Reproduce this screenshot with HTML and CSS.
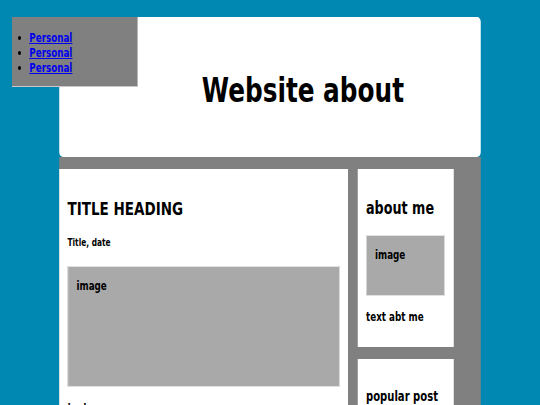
FILE: index.html
```html
<!DOCTYPE html>
<html>
<head>
<meta charset="utf-8">
<title>Website about</title>
<link rel="stylesheet" href="styles.css">
</head>
<body>
<div class="stage">
  <nav class="nav">
    <ul>
      <li><a href="#">Personal</a></li>
      <li><a href="#">Personal</a></li>
      <li><a href="#">Personal</a></li>
    </ul>
  </nav>
  <header class="header">
    <h1 class="site-title">Website about</h1>
  </header>
  <div class="content">
    <main class="post">
      <h2 class="post-title">TITLE HEADING</h2>
      <p class="meta">Title, date</p>
      <div class="img img-big">image</div>
      <p class="text">text</p>
    </main>
    <aside class="side">
      <section class="card">
        <h3 class="card-title">about me</h3>
        <div class="img img-small">image</div>
        <p class="text">text abt me</p>
      </section>
      <section class="card">
        <h4 class="card-sub">popular post</h4>
      </section>
    </aside>
  </div>
</div>
</body>
</html>
```

FILE: styles.css
```css
html, body {
  margin: 0;
  height: 100%;
  overflow: hidden;
  background: #0088b3;
}

.stage {
  width: 720px;
  transform: scaleX(0.75);
  transform-origin: 0 0;
  position: relative;
  padding-top: 17px;
  font-family: "DejaVu Sans", sans-serif;
  color: #000;
}

.nav {
  position: absolute;
  left: 16px;
  top: 17px;
  width: 168px;
  height: 70px;
  box-sizing: border-box;
  background: #808080;
  border-right: 1px solid #c8c8c8;
  border-bottom: 1px solid #c8c8c8;
  z-index: 2;
}

.nav ul {
  margin: 13px 0 12px;
  padding-left: 23px;
  font-family: "DejaVu Sans Condensed", "DejaVu Sans", sans-serif;
  font-stretch: condensed;
  font-weight: bold;
  font-size: 13px;
  line-height: 15px;
}

.nav a {
  color: #0000ee;
  text-decoration: underline;
}

.header {
  margin-left: 79px;
  width: 562px;
  height: 140px;
  box-sizing: border-box;
  background: #fff;
  border-radius: 5px;
  padding: 54px 0 0 190px;
}

.site-title {
  margin: 0;
  font-size: 33px;
  font-weight: bold;
  line-height: normal;
}

.content {
  margin-left: 79px;
  width: 562px;
  box-sizing: border-box;
  background: #808080;
  padding: 12px 36px 0 0;
  display: flex;
  gap: 13px;
  align-items: flex-start;
  min-height: 400px;
}

.post {
  width: 385px;
  box-sizing: border-box;
  background: #fff;
  padding: 29px 11px 20px;
  min-height: 300px;
}

.post-title {
  margin: 0;
  font-size: 18px;
  font-weight: bold;
  line-height: 21px;
}

.meta,
.img,
.text {
  font-family: "DejaVu Sans Condensed", "DejaVu Sans", sans-serif;
  font-stretch: condensed;
  font-weight: bold;
}

.meta {
  margin: 17px 0 17px;
  font-size: 11px;
  line-height: 13px;
}

.img {
  background: #a9a9a9;
  border: 1px solid #e2e2e2;
  box-sizing: border-box;
  padding: 11px;
  font-size: 13px;
  line-height: 15px;
}

.img-big {
  height: 121px;
}

.img-small {
  height: 61px;
}

.text {
  margin: 13px 0 0;
  font-size: 13px;
  line-height: 15px;
}

.side {
  width: 128px;
  display: flex;
  flex-direction: column;
  gap: 12px;
}

.card {
  background: #fff;
  padding: 29px 12px 23px 11px;
}

.card-title {
  margin: 0 0 17px;
  font-size: 17px;
  font-weight: bold;
  line-height: 20px;
}

.card-sub {
  margin: 1px 0 0;
  font-size: 13.4px;
  font-weight: bold;
  line-height: 16px;
  white-space: nowrap;
}
```
